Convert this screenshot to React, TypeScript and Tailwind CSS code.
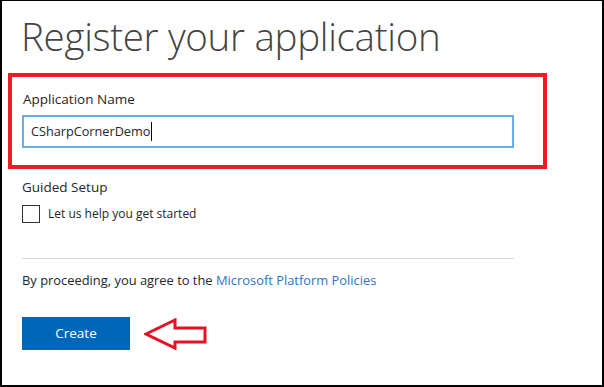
export default function App() {
  return (
    <div
      className="w-[604px] h-[387px] box-border border-2 border-t border-black bg-white overflow-hidden"
      style={{ fontFamily: '"Open Sans", "Noto Sans", sans-serif' }}
    >
      <h1 className="ml-[19px] mt-[9px] h-[52px] text-[38.5px] leading-[52px] font-light text-[#444] tracking-[-0.3px]">
        Register your application
      </h1>

      <div className="ml-[6px] mt-[11px] w-[539px] h-[96px] box-border border-[4px] border-[#ec1c24] pl-[10px] pt-[12px]">
        <label className="block pl-[1px] text-[13.5px] leading-[20px] text-[#262626]">
          Application Name
        </label>
        <div className="mt-[6px] w-[492px] h-[33px] box-border border-2 border-[#69aee8] flex items-center pl-[7px] text-[12.7px] text-[#262626]">
          CSharpCornerDemo
          <span className="inline-block w-px h-[19px] bg-black ml-[1px]" />
        </div>
      </div>

      <div className="ml-[20px] mt-[8px]">
        <div className="text-[13.5px] leading-[20px] text-[#262626]">Guided Setup</div>
        <label className="mt-[8px] flex items-center gap-[8px] text-[12px] text-[#262626]">
          <span className="w-[18px] h-[18px] box-border border border-[#333] bg-white" />
          Let us help you get started
        </label>

        <div className="mt-[35px] w-[492px] h-px bg-[#d9d9d9]" />

        <p className="mt-[11px] text-[12.9px] leading-[20px] text-[#262626]">
          By proceeding, you agree to the{' '}
          <a className="text-[#2f74c2]">Microsoft Platform Policies</a>
        </p>

        <div className="mt-[27px] flex items-center gap-[14px]">
          <button className="w-[108px] h-[33px] bg-[#0067b8] text-white text-[13.5px]">
            Create
          </button>
          <svg width="64" height="32" viewBox="0 0 64 32">
            <path
              d="M2 16 L31 2 L31 10 L61 10 L61 24 L31 24 L31 30 Z"
              fill="none"
              stroke="#e81123"
              strokeWidth="3"
              strokeLinejoin="miter"
            />
          </svg>
        </div>
      </div>
    </div>
  )
}
